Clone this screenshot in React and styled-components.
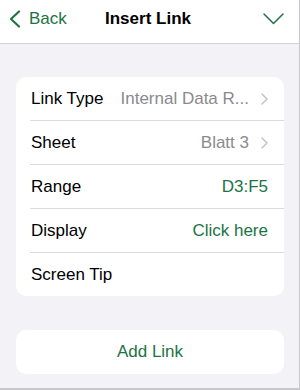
import React from 'react';
import styled, { createGlobalStyle } from 'styled-components';

const GlobalStyle = createGlobalStyle`
	*, *::before, *::after {
		box-sizing: border-box;
	}
	html, body {
		margin: 0;
		padding: 0;
	}
	body {
		font-family: 'Liberation Sans', Arial, sans-serif;
		-webkit-font-smoothing: antialiased;
	}
`;

const green = '#217346';

const Frame = styled.div`
	width: 300px;
	height: 390px;
	border-right: 1px solid #c7c7cc;
	border-bottom: 2px solid #c7c7cc;
	background: #f2f2f7;
	display: flex;
	flex-direction: column;
`;

const Header = styled.header`
	height: 44px;
	flex-shrink: 0;
	background: #fff;
	border-bottom: 1px solid #d1d1d6;
	display: grid;
	grid-template-columns: 1fr auto 1fr;
	align-items: start;
	padding: 9px 15px 0 8px;
`;

const BackButton = styled.button`
	justify-self: start;
	display: flex;
	align-items: center;
	gap: 8px;
	border: 0;
	background: transparent;
	padding: 0;
	font: inherit;
	font-size: 17px;
	color: ${green};
	height: 20px;
`;

const Title = styled.h1`
	margin: 0 0 0 4px;
	font-size: 17px;
	font-weight: 700;
	color: #000;
	line-height: 20px;
`;

const CloseButton = styled.button`
	justify-self: end;
	border: 0;
	background: transparent;
	padding: 0;
	margin-top: 4px;
	display: flex;
`;

const Content = styled.main`
	display: flex;
	flex-direction: column;
	gap: 34px;
	padding: 33px 15px 0 16px;
`;

const Card = styled.section`
	background: #fff;
	border-radius: 10px;
	overflow: hidden;
`;

const Row = styled.div`
	height: 43px;
	display: flex;
	align-items: center;
	padding: 0 16px 0 15px;
	gap: 16px;
	font-size: 17px;

	& + & {
		height: 44px;
		border-top: 1px solid #dcdce0;
		margin-left: 14px;
		padding-left: 1px;
	}
`;

const Label = styled.span`
	color: #000;
	white-space: nowrap;
`;

const Value = styled.span`
	margin-left: auto;
	display: flex;
	align-items: center;
	gap: 12px;
	white-space: nowrap;
	color: ${(p) => (p.$accent ? green : '#8a8a8e')};
`;

const ActionButton = styled.button`
	height: 44px;
	border: 0;
	border-radius: 10px;
	background: #fff;
	font: inherit;
	font-size: 17px;
	color: ${green};
`;

const Chevron = () => (
	<svg width="7" height="12" viewBox="0 0 7 12">
		<path d="M1 1l5 5-5 5" fill="none" stroke="#c4c4c7" strokeWidth="1.5" strokeLinecap="round" strokeLinejoin="round" />
	</svg>
);

const rows = [
	{ label: 'Link Type', value: 'Internal Data R...', more: true },
	{ label: 'Sheet', value: 'Blatt 3', more: true },
	{ label: 'Range', value: 'D3:F5', accent: true },
	{ label: 'Display', value: 'Click here', accent: true },
	{ label: 'Screen Tip' },
];

export default function App() {
	return (
		<>
			<GlobalStyle />
			<Frame>
				<Header>
					<BackButton>
						<svg width="13" height="18" viewBox="0 0 13 18">
							<path d="M11 1.5L3 9l8 7.5" fill="none" stroke={green} strokeWidth="2.2" strokeLinecap="round" strokeLinejoin="round" />
						</svg>
						Back
					</BackButton>
					<Title>Insert Link</Title>
					<CloseButton>
						<svg width="21" height="12" viewBox="0 0 21 12">
							<path d="M1 1l9.5 9.5L20 1" fill="none" stroke={green} strokeWidth="1.5" strokeLinecap="round" strokeLinejoin="round" />
						</svg>
					</CloseButton>
				</Header>
				<Content>
					<Card>
						{rows.map((r) => (
							<Row key={r.label}>
								<Label>{r.label}</Label>
								{r.value && (
									<Value $accent={r.accent}>
										{r.value}
										{r.more && <Chevron />}
									</Value>
								)}
							</Row>
						))}
					</Card>
					<ActionButton>Add Link</ActionButton>
				</Content>
			</Frame>
		</>
	);
}
